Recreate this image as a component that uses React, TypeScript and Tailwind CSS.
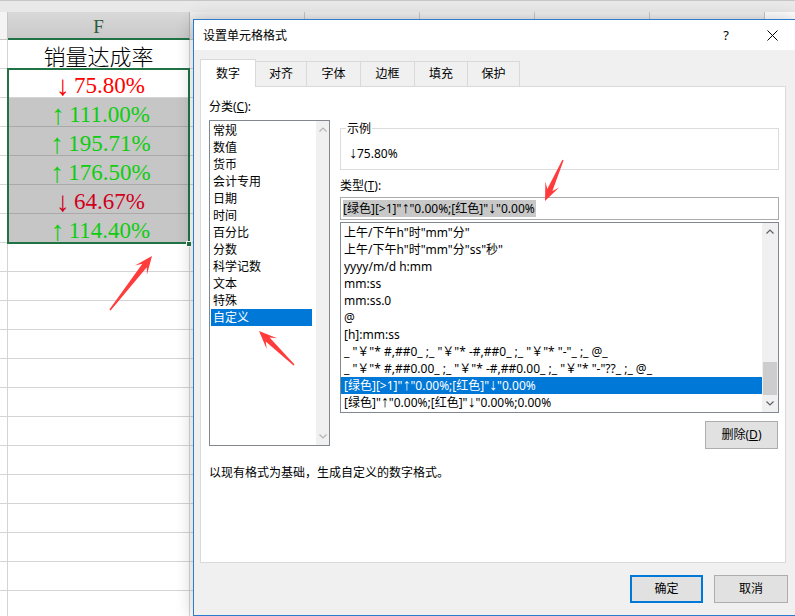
import React from "react";

const sheetValues = [
  { up: false, v: "75.80%" },
  { up: true, v: "111.00%" },
  { up: true, v: "195.71%" },
  { up: true, v: "176.50%" },
  { up: false, v: "64.67%" },
  { up: true, v: "114.40%" },
];

const categories = [
  "常规",
  "数值",
  "货币",
  "会计专用",
  "日期",
  "时间",
  "百分比",
  "分数",
  "科学记数",
  "文本",
  "特殊",
  "自定义",
];

const formats = [
  '上午/下午h"时"mm"分"',
  '上午/下午h"时"mm"分"ss"秒"',
  "yyyy/m/d h:mm",
  "mm:ss",
  "mm:ss.0",
  "@",
  "[h]:mm:ss",
  '_ "￥"* #,##0_ ;_ "￥"* -#,##0_ ;_ "￥"* "-"_ ;_ @_',
  '_ "￥"* #,##0.00_ ;_ "￥"* -#,##0.00_ ;_ "￥"* "-"??_ ;_ @_',
  '[绿色][>1]"↑"0.00%;[红色]"↓"0.00%',
  '[绿色]"↑"0.00%;[红色]"↓"0.00%;0.00%',
];

// arrows in the text use a narrow, tall glyph
function Fmt({ text }: { text: string }) {
  return (
    <>
      {text.split(/([↑↓])/).map((s, i) =>
        s === "↑" || s === "↓" ? (
          <span key={i} className="font-['Liberation_Sans',sans-serif] text-[16px] leading-[12px]">
            {s}
          </span>
        ) : (
          s
        )
      )}
    </>
  );
}

function arrowPoints(x1: number, y1: number, x2: number, y2: number) {
  const dx = x2 - x1;
  const dy = y2 - y1;
  const len = Math.hypot(dx, dy);
  const ux = dx / len;
  const uy = dy / len;
  const nx = -uy;
  const ny = ux;
  const p = (t: number, w: number) =>
    `${(x1 + ux * t + nx * w).toFixed(1)},${(y1 + uy * t + ny * w).toFixed(1)}`;
  return [
    p(0, 0.7),
    p(len - 12, 2.8),
    p(len - 18, 7.5),
    p(len, 0),
    p(len - 18, -7.5),
    p(len - 12, -2.8),
    p(0, -0.7),
  ].join(" ");
}

function Chevron({ down, color }: { down?: boolean; color: string }) {
  return (
    <svg width="8" height="5" viewBox="0 0 8 5">
      <path
        d={down ? "M0.5 0.5 L4 4 L7.5 0.5" : "M0.5 4.5 L4 1 L7.5 4.5"}
        fill="none"
        stroke={color}
        strokeWidth="1.2"
      />
    </svg>
  );
}

function Sheet() {
  const rows = Array.from({ length: 20 }, (_, i) => i);
  return (
    <div className="font-['Liberation_Serif','Noto_Sans_CJK_SC',serif]">
      <div className="h-[12px] bg-[#e9e9e9] border-t border-[#c6c6c6]" />
      <div className="flex h-[28px]">
        <div className="w-[8px] bg-[#f4f4f4] border-r border-b border-[#c6c6c6]" />
        <div className="w-[182px] flex items-end justify-center pb-0 bg-gradient-to-b from-[#d9d9d9] to-[#c9c9c9] border-r border-[#b5b5b5] border-b-2 border-b-[#217346] text-[19px] leading-[22px] text-[#2f5a3d]">
          F
        </div>
        {["G", "H", "I", "J", "K"].map((c) => (
          <div
            key={c}
            className="w-[115px] shrink-0 bg-gradient-to-b from-[#f0f0f0] to-[#dedede] border-r border-b border-[#c6c6c6]"
          />
        ))}
      </div>
      {rows.map((r) => {
        const data = r >= 1 && r <= 6 ? sheetValues[r - 1] : null;
        const selected = r >= 2 && r <= 6;
        return (
          <div key={r} className="flex h-[29px]">
            <div className="w-[8px] border-r border-b border-[#d4d4d4]" />
            <div
              className={
                selected
                  ? "w-[182px] flex items-end justify-center bg-[#c6c6c6] border-r border-b border-[#a9a9a9]"
                  : "w-[182px] flex items-end justify-center border-r border-b border-[#d4d4d4]"
              }
            >
              {r === 0 && (
                <span className="self-center pt-[2px] text-[22px] leading-[26px] font-light text-black font-['Noto_Sans_CJK_SC',sans-serif]">
                  销量达成率
                </span>
              )}
              {data && (
                <span
                  className={
                    data.up
                      ? "flex text-[23px] leading-[23px] text-[#10cc10]"
                      : r === 1
                        ? "flex text-[23px] leading-[23px] text-[#ff0000]"
                        : "flex text-[23px] leading-[23px] text-[#d0001c]"
                  }
                >
                  <span className="w-[22px] text-center font-['Liberation_Sans',sans-serif] text-[28px] leading-[23px] font-light">
                    {data.up ? "↑" : "↓"}
                  </span>
                  <span>{data.v}</span>
                </span>
              )}
            </div>
            <div className="flex-1 border-b border-[#d4d4d4]" />
          </div>
        );
      })}
    </div>
  );
}

function Dialog() {
  return (
    <div className="absolute left-[193px] top-[19px] w-[603px] h-[597px] flex flex-col border border-[#2b7bd0] bg-[#f0f0f0] shadow-[0_0_16px_rgba(0,0,0,0.22)] text-[12px] text-black font-['Noto_Sans','Noto_Sans_CJK_SC',sans-serif]">
      <div className="h-[30px] shrink-0 flex items-center bg-white pl-[9px]">
        <span className="leading-[17px]">设置单元格格式</span>
        <div className="flex-1" />
        <div className="w-[46px] text-center text-[13px] leading-[17px]">?</div>
        <div className="w-[46px] flex justify-center">
          <svg width="11" height="11" viewBox="0 0 11 11">
            <path d="M0.5 0.5 L10.5 10.5 M10.5 0.5 L0.5 10.5" stroke="#000" strokeWidth="1" />
          </svg>
        </div>
      </div>

      <div className="flex-1 flex flex-col px-[6px] pt-[9px]">
        <div className="flex items-end h-[28px]">
          <div className="relative z-10 w-[56px] h-[28px] flex items-center justify-center bg-white border border-b-0 border-[#d9d9d9]">
            数字
          </div>
          {[
            { t: "对齐", w: "w-[52px]" },
            { t: "字体", w: "w-[55px]" },
            { t: "边框", w: "w-[55px]" },
            { t: "填充", w: "w-[54px]" },
            { t: "保护", w: "w-[53px]" },
          ].map((tab) => (
            <div
              key={tab.t}
              className={`${tab.w} -ml-px h-[26px] flex items-center justify-center bg-[#f0f0f0] border border-[#d9d9d9]`}
            >
              {tab.t}
            </div>
          ))}
        </div>

        <div className="-mt-px w-[586px] h-[477px] shrink-0 border border-[#d9d9d9] bg-white pl-[8px] flex flex-col">
          <div className="flex gap-[10px]">
            {/* category column */}
            <div className="w-[121px] pt-[11px] flex flex-col">
              <div className="leading-[17px]">
                分类(<span className="underline">C</span>):
              </div>
              <div className="mt-[5px] h-[326px] flex border border-[#828790]">
                <div className="flex-1 pl-[1px] pr-[4px] pt-[1px]">
                  {categories.map((c) => (
                    <div
                      key={c}
                      className={
                        c === "自定义"
                          ? "h-[17px] leading-[17px] pl-[2px] bg-[#0078d7] text-white"
                          : "h-[17px] leading-[17px] pl-[2px]"
                      }
                    >
                      {c}
                    </div>
                  ))}
                </div>
                <div className="w-[13px] bg-[#f0f0f0] flex flex-col justify-between items-center py-[6px]">
                  <Chevron color="#b4b4b4" />
                  <Chevron down color="#b4b4b4" />
                </div>
              </div>
            </div>

            {/* format column */}
            <div className="w-[439px] pt-[41px] flex flex-col">
              <div className="border border-[#dcdcdc] pl-[8px] pb-[7px]">
                <div className="-mt-[9px] -ml-[3px] w-fit bg-white px-[1px] leading-[17px]">示例</div>
                <div className="mt-[8px] leading-[17px]">
                  <Fmt text="↓75.80%" />
                </div>
              </div>
              <div className="mt-[7px] leading-[17px]">
                类型(<span className="underline">T</span>):
              </div>
              <div className="mt-[3px] h-[23px] flex items-center border border-[#ababab] pl-[2px]">
                <span className="bg-[#c8c8c8] leading-[17px] pr-[1px]">
                  <Fmt text={'[绿色][>1]"↑"0.00%;[红色]"↓"0.00%'} />
                </span>
              </div>
              <div className="mt-[2px] h-[191px] flex border border-[#828790]">
                <div className="flex-1 pt-[1px]">
                  {formats.map((f, i) => (
                    <div
                      key={i}
                      className={
                        i === 9
                          ? "h-[17px] leading-[17px] pl-[3px] whitespace-pre bg-[#0078d7] text-white"
                          : "h-[17px] leading-[17px] pl-[3px] whitespace-pre"
                      }
                    >
                      <Fmt text={f} />
                    </div>
                  ))}
                </div>
                <div className="w-[16px] bg-[#f0f0f0] flex flex-col">
                  <div className="h-[17px] flex items-center justify-center">
                    <Chevron color="#606060" />
                  </div>
                  <div className="flex-1 flex flex-col justify-end">
                    <div className="h-[33px] mx-[1px] bg-[#cdcdcd]" />
                  </div>
                  <div className="h-[17px] flex items-center justify-center">
                    <Chevron down color="#606060" />
                  </div>
                </div>
              </div>
              <div className="mt-[8px] mr-[1px] self-end w-[73px] h-[28px] flex items-center justify-center bg-[#e1e1e1] border border-[#adadad]">
                删除(<span className="underline">D</span>)
              </div>
            </div>
          </div>
          <div className="mt-[15px] leading-[17px]">以现有格式为基础，生成自定义的数字格式。</div>
        </div>

        <div className="mt-[12px] flex justify-end gap-[11px] pr-[1px]">
          <div className="w-[73px] h-[28px] flex items-center justify-center bg-[#e1e1e1] border-2 border-[#0078d7]">
            确定
          </div>
          <div className="w-[74px] h-[28px] flex items-center justify-center bg-[#e1e1e1] border border-[#adadad]">
            取消
          </div>
        </div>
      </div>
    </div>
  );
}

export default function App() {
  return (
    <div className="relative w-[795px] h-[616px] overflow-hidden bg-white">
      <Sheet />

      {/* selection frame over F2:F7 */}
      <div className="absolute left-[7px] top-[68px] w-[183px] h-[176px] border-2 border-[#217346]" />
      <div className="absolute left-[186px] top-[241px] w-[6px] h-[6px] bg-[#217346] border border-white" />

      <Dialog />

      {/* red annotation arrows */}
      <svg className="absolute inset-0 pointer-events-none" width="795" height="616">
        <polygon points={arrowPoints(110, 310, 152, 256)} fill="#ff3b3b" />
        <polygon points={arrowPoints(294, 365, 259, 331)} fill="#ff3b3b" />
        <polygon points={arrowPoints(563, 160, 545, 201)} fill="#ff3b3b" />
      </svg>
    </div>
  );
}
